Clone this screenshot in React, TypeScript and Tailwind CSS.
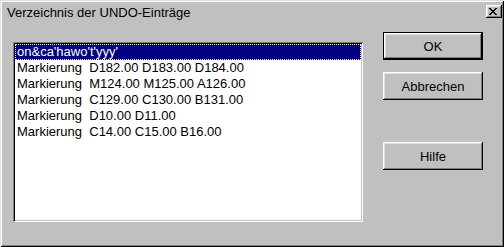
import React from 'react';

const rows = [
  "on&ca'hawo't'yyy'",
  'Markierung  D182.00 D183.00 D184.00',
  'Markierung  M124.00 M125.00 A126.00',
  'Markierung  C129.00 C130.00 B131.00',
  'Markierung  D10.00 D11.00',
  'Markierung  C14.00 C15.00 B16.00',
];

// classic raised / sunken bevels
const raised =
  'shadow-[inset_-1px_-1px_0_#000,inset_1px_1px_0_#fff,inset_-2px_-2px_0_#808080,inset_2px_2px_0_#dfdfdf]';
const raisedDefault =
  'shadow-[inset_0_0_0_1px_#000,inset_-2px_-2px_0_#000,inset_2px_2px_0_#fff,inset_-3px_-3px_0_#808080,inset_3px_3px_0_#dfdfdf]';

const CloseGlyph: React.FC = () => (
  <svg width="8" height="7" viewBox="0 0 8 7" shapeRendering="crispEdges">
    <path
      d="M0 0h2v1H0zM6 0h2v1H6zM1 1h2v1H1zM5 1h2v1H5zM2 2h4v1H2zM3 3h2v1H3zM2 4h4v1H2zM1 5h2v1H1zM5 5h2v1H5zM0 6h2v1H0zM6 6h2v1H6z"
      fill="#000"
    />
  </svg>
);

const Button: React.FC<{ label: string; isDefault?: boolean }> = ({ label, isDefault }) => (
  <button
    className={`w-[100px] h-[28px] bg-[#c0c0c0] text-[13px] leading-[15px] text-black flex items-center justify-center ${
      isDefault ? raisedDefault : raised
    }`}
  >
    {label}
  </button>
);

export default function App() {
  return (
    <div
      className="w-[504px] h-[247px] bg-[#c0c0c0] p-[2px] flex flex-col font-['Liberation_Sans',Arial,sans-serif] text-black shadow-[inset_1px_1px_0_#dfdfdf,inset_-1px_-1px_0_#000,inset_2px_2px_0_#fff,inset_-2px_-2px_0_#808080]"
    >
      {/* title row */}
      <div className="h-[20px] pt-[3px] flex items-start justify-between">
        <span className="ml-[5px] text-[13px] leading-[15px]">Verzeichnis der UNDO-Einträge</span>
        <div className={`w-[16px] h-[13px] flex items-center justify-center pr-[2px] pb-[1px] ${raised}`}>
          <CloseGlyph />
        </div>
      </div>

      {/* body */}
      <div className="flex items-start">
        <div className="ml-[11px] mt-[20px] w-[350px] h-[180px] bg-white p-[2px] shadow-[inset_1px_1px_0_#808080,inset_-1px_-1px_0_#fff,inset_2px_2px_0_#000,inset_-2px_-2px_0_#c0c0c0]">
          {rows.map((r, i) => (
            <div
              key={i}
              className={`h-[16px] pl-[1px] border border-dotted text-[13px] leading-[14px] whitespace-pre ${
                i === 0 ? 'bg-[#000080] text-white border-[#ffff80]' : 'border-transparent'
              }`}
            >
              {r}
            </div>
          ))}
        </div>

        <div className="ml-[20px] mt-[10px] flex flex-col">
          <Button label="OK" isDefault />
          <div className="mt-[12px]">
            <Button label="Abbrechen" />
          </div>
          <div className="mt-[42px]">
            <Button label="Hilfe" />
          </div>
        </div>
      </div>
    </div>
  );
}
